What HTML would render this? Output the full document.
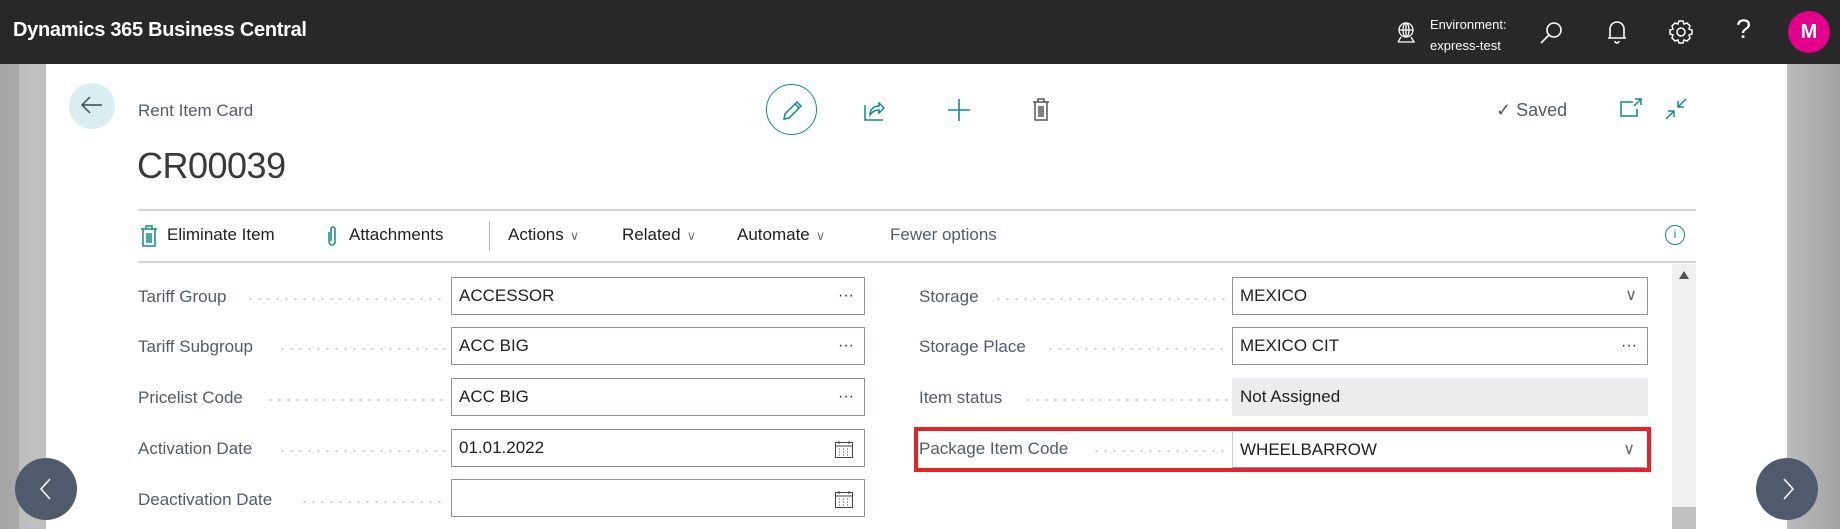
<!DOCTYPE html>
<html><head><meta charset="utf-8"><style>
*{margin:0;padding:0;box-sizing:border-box}
body{width:1840px;height:529px;overflow:hidden;position:relative;font-family:"Liberation Sans",sans-serif;background:linear-gradient(90deg,#a5a5a5 0,#a8a8a8 19px,#bdbdbd 19px,#c2c2c2 46px,#fff 46px,#fff 1787px,#bcbcbc 1787px,#a3a3a3 1840px)}
.a{position:absolute}
.hdr{left:0;top:0;width:1840px;height:64px;background:#282828}
.card{left:46px;top:64px;width:1741px;height:465px;background:#fff}
.lbl{position:absolute;font-size:17px;color:#505c6d;white-space:nowrap;display:flex;align-items:center}
.dots{position:absolute;height:2px;background-image:radial-gradient(circle,#c8c8c8 1px,transparent 1.2px);background-size:9px 2px}
.box{position:absolute;border:1px solid #8a939e;height:38px;font-size:17px;color:#212121;padding-left:7px;line-height:36px;background:#fff}
.box .r{position:absolute;right:10px;top:0;color:#333;font-size:16px}
.tb{position:absolute;top:225px;font-size:17px;color:#212121;white-space:nowrap}
.chev{color:#777;font-size:13px;margin-left:6px}
</style></head><body>
<div class="a hdr"></div>
<div class="a" style="left:13px;top:19px;font-size:20px;font-weight:bold;color:#fff;letter-spacing:-0.3px">Dynamics 365 Business Central</div>
<svg class="a" style="left:1394px;top:20px" width="24" height="26" viewBox="0 0 24 26" fill="none" stroke="#fff" stroke-width="1.3"><circle cx="12" cy="10" r="7"/><ellipse cx="12" cy="10" rx="3" ry="7"/><path d="M5 10h14M12 3v14M4 22h16l-3-5M4 22l3-5"/></svg>
<div class="a" style="left:1430px;top:14px;font-size:13px;color:#fff;line-height:21px">Environment:<br>express-test</div>
<svg class="a" style="left:1538px;top:20px" width="26" height="26" viewBox="0 0 26 26" fill="none" stroke="#fff" stroke-width="1.6"><circle cx="16" cy="10" r="7"/><path d="M11 15l-8 8"/></svg>
<svg class="a" style="left:1605px;top:18px" width="24" height="28" viewBox="0 0 24 28" fill="none" stroke="#fff" stroke-width="1.6"><path d="M5 20V11a7 7 0 0114 0v9zM3 20h18M10 23a2 2 0 004 0"/></svg>
<svg class="a" style="left:1668px;top:19px" width="26" height="26" viewBox="0 0 26 26" fill="none" stroke="#fff" stroke-width="1.5"><circle cx="13" cy="13" r="4"/><path d="M11 2h4l1 3 3-1 3 3-1 3 3 1v4l-3 1 1 3-3 3-3-1-1 3h-4l-1-3-3 1-3-3 1-3-3-1v-4l3-1-1-3 3-3 3 1z"/></svg>
<div class="a" style="left:1736px;top:14px;font-size:27px;color:#fff">?</div>
<div class="a" style="left:1788px;top:11px;width:42px;height:42px;border-radius:50%;background:#e3008c;color:#fff;font-weight:bold;font-size:20px;text-align:center;line-height:42px">M</div>
<div class="a card"></div>
<div class="a" style="left:69px;top:83px;width:46px;height:46px;border-radius:50%;background:#d9eef0"></div>
<svg class="a" style="left:79px;top:93px" width="26" height="26" viewBox="0 0 26 26" fill="none" stroke="#444" stroke-width="1.4"><path d="M3 12h20M11 4l-8 8 8 8"/></svg>
<div class="a" style="left:138px;top:101px;font-size:17px;color:#505c6d">Rent Item Card</div>
<div class="a" style="left:137px;top:145px;font-size:36px;color:#3a3a3a;letter-spacing:-0.5px">CR00039</div>
<div class="a" style="left:766px;top:84px;width:51px;height:51px;border-radius:50%;border:1.5px solid #108a8a"></div>
<svg class="a" style="left:780px;top:97px" width="26" height="26" viewBox="0 0 26 26" fill="none" stroke="#108a8a" stroke-width="1.5"><path d="M4 22l1-5L17 5l4 4L9 21zM15 7l4 4"/></svg>
<svg class="a" style="left:862px;top:97px" width="26" height="26" viewBox="0 0 26 26" fill="none" stroke="#108a8a" stroke-width="1.5"><path d="M3 8v15h18M8 18c0-6 4-9 9-9V6l5 5-5 5v-3c-4 0-7 2-9 5z"/></svg>
<svg class="a" style="left:946px;top:97px" width="26" height="26" viewBox="0 0 26 26" fill="none" stroke="#108a8a" stroke-width="1.6"><path d="M13 2v22M2 13h22"/></svg>
<svg class="a" style="left:1030px;top:97px" width="22" height="26" viewBox="0 0 22 26" fill="none" stroke="#555" stroke-width="1.5"><path d="M3 5h16M8 5V2h6v3M5 5v18h12V5M9 9v11M11 9v11M13 9v11"/></svg>
<div class="a" style="left:1496px;top:100px;font-size:18px;color:#505c6d">&#10003; Saved</div>
<svg class="a" style="left:1619px;top:97px" width="26" height="22" viewBox="0 0 26 22" fill="none" stroke="#108a8a" stroke-width="1.5"><path d="M14 5H2v14h16v-7M16 2h6v6M22 2l-7 7"/></svg>
<svg class="a" style="left:1663px;top:96px" width="26" height="26" viewBox="0 0 26 26" fill="none" stroke="#108a8a" stroke-width="1.5"><path d="M23 3l-8 8M15 5v6h6M3 23l8-8M5 15h6v6"/></svg>
<div class="a" style="left:138px;top:209px;width:1558px;height:1.5px;background:#d6d6d6"></div>
<div class="a" style="left:138px;top:261px;width:1558px;height:1.5px;background:#d6d6d6"></div>
<svg class="a" style="left:140px;top:224px" width="18" height="24" viewBox="0 0 18 24" fill="none" stroke="#108a8a" stroke-width="1.5"><path d="M1 5h16M6 5V2h6v3M3 5v17h12V5M7 9v10M9 9v10M11 9v10"/></svg>
<div class="tb" style="left:167px">Eliminate Item</div>
<svg class="a" style="left:325px;top:224px" width="14" height="24" viewBox="0 0 14 24" fill="none" stroke="#108a8a" stroke-width="1.5"><path d="M4 8v10a3 3 0 006 0V5a2 2 0 00-4 0v12"/></svg>
<div class="tb" style="left:349px">Attachments</div>
<div class="a" style="left:489px;top:221px;width:1px;height:30px;background:#bbb"></div>
<div class="tb" style="left:508px">Actions<span class="chev">&#8744;</span></div>
<div class="tb" style="left:622px">Related<span class="chev">&#8744;</span></div>
<div class="tb" style="left:737px">Automate<span class="chev">&#8744;</span></div>
<div class="tb" style="left:890px;color:#505c6d">Fewer options</div>
<div class="a" style="left:1665px;top:225px;width:20px;height:20px;border-radius:50%;border:1.5px solid #108a8a;color:#108a8a;font-size:12px;text-align:center;line-height:17px">i</div>
<div class="a" style="left:1672px;top:264px;width:24px;height:265px;background:#f0f0f0"></div>
<div class="a" style="left:1672px;top:507px;width:24px;height:22px;background:#c2c2c2"></div>
<div class="a" style="left:1679px;top:271px;width:0;height:0;border-left:5px solid transparent;border-right:5px solid transparent;border-bottom:8px solid #555"></div>

<div class="lbl" style="left:138px;top:287px">Tariff Group</div><div class="dots" style="left:246px;top:298px;width:200px"></div>
<div class="box" style="left:451px;top:277px;width:414px">ACCESSOR<span class="r">&middot;&middot;&middot;</span></div>
<div class="lbl" style="left:138px;top:337px">Tariff Subgroup</div><div class="dots" style="left:278px;top:348px;width:168px"></div>
<div class="box" style="left:451px;top:327px;width:414px">ACC BIG<span class="r">&middot;&middot;&middot;</span></div>
<div class="lbl" style="left:138px;top:388px">Pricelist Code</div><div class="dots" style="left:266px;top:399px;width:180px"></div>
<div class="box" style="left:451px;top:378px;width:414px">ACC BIG<span class="r">&middot;&middot;&middot;</span></div>
<div class="lbl" style="left:138px;top:439px">Activation Date</div><div class="dots" style="left:278px;top:450px;width:168px"></div>
<div class="box" style="left:451px;top:429px;width:414px">01.01.2022<svg class="r" style="top:9px" width="20" height="20" viewBox="0 0 20 20" fill="none" stroke="#444"><rect x="1.5" y="3.5" width="17" height="15"/><path d="M1.5 7h17M5 2v3M15 2v3M5 10h1M9 10h1M13 10h1M5 13h1M9 13h1M13 13h1M5 16h1M9 16h1M13 16h1"/></svg></div>
<div class="lbl" style="left:138px;top:490px">Deactivation Date</div><div class="dots" style="left:300px;top:501px;width:146px"></div>
<div class="box" style="left:451px;top:479px;width:414px"><svg class="r" style="top:9px" width="20" height="20" viewBox="0 0 20 20" fill="none" stroke="#444"><rect x="1.5" y="3.5" width="17" height="15"/><path d="M1.5 7h17M5 2v3M15 2v3M5 10h1M9 10h1M13 10h1M5 13h1M9 13h1M13 13h1M5 16h1M9 16h1M13 16h1"/></svg></div>

<div class="lbl" style="left:919px;top:287px">Storage</div><div class="dots" style="left:994px;top:298px;width:234px"></div>
<div class="box" style="left:1232px;top:277px;width:416px">MEXICO<span class="r" style="color:#666">&#8744;</span></div>
<div class="lbl" style="left:919px;top:337px">Storage Place</div><div class="dots" style="left:1046px;top:348px;width:182px"></div>
<div class="box" style="left:1232px;top:327px;width:416px">MEXICO CIT<span class="r">&middot;&middot;&middot;</span></div>
<div class="lbl" style="left:919px;top:388px">Item status</div><div class="dots" style="left:1024px;top:399px;width:204px"></div>
<div class="box" style="left:1232px;top:378px;width:416px;background:#ebecee;border-color:#ebecee">Not Assigned</div>
<div class="a" style="left:914px;top:427px;width:737px;height:45px;border:4px solid #e8202a"></div>
<div class="lbl" style="left:919px;top:439px">Package Item Code</div><div class="dots" style="left:1092px;top:450px;width:136px"></div>
<div class="box" style="left:1232px;top:431px;width:414px;height:37px;border-color:#fff;border-left-color:#ccc;border-bottom-color:#8a939e">WHEELBARROW<span class="r" style="color:#666">&#8744;</span></div>

<div class="a" style="left:15px;top:458px;width:62px;height:62px;border-radius:50%;background:#4f5b6c"></div>
<svg class="a" style="left:36px;top:477px" width="20" height="24" viewBox="0 0 20 24" fill="none" stroke="#fff" stroke-width="1.5"><path d="M14 2L5 12l9 10"/></svg>
<div class="a" style="left:1756px;top:458px;width:62px;height:62px;border-radius:50%;background:#4f5b6c"></div>
<svg class="a" style="left:1778px;top:477px" width="20" height="24" viewBox="0 0 20 24" fill="none" stroke="#fff" stroke-width="1.5"><path d="M6 2l9 10-9 10"/></svg>
</body></html>
